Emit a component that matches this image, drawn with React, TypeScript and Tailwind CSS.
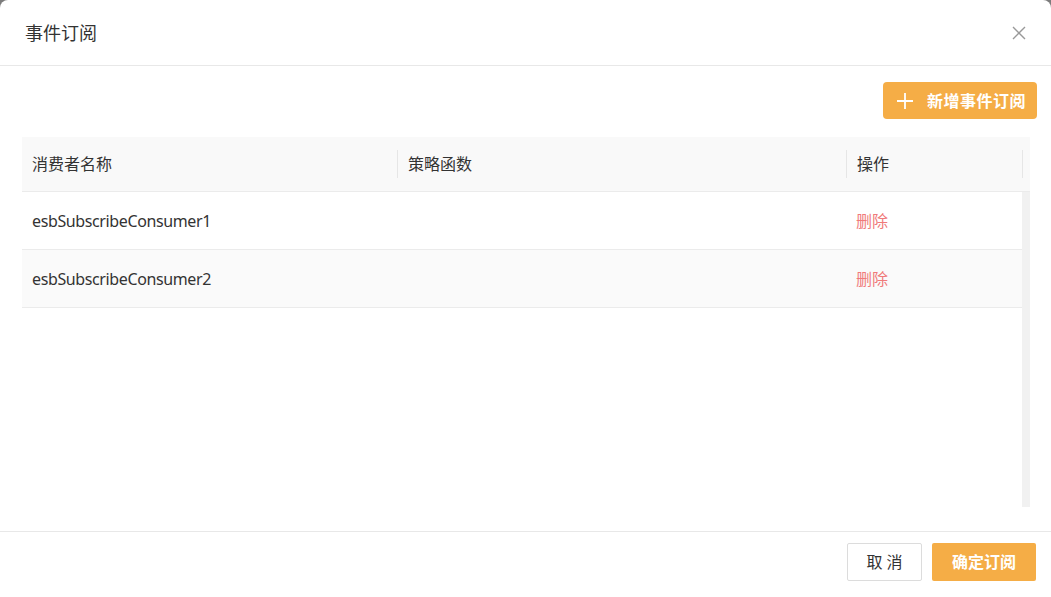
import React from "react";

const rows = [
  { name: "esbSubscribeConsumer1", fn: "" },
  { name: "esbSubscribeConsumer2", fn: "" },
];

export default function App() {
  return (
    <div
      className="w-[1051px] h-[597px] bg-[#7c7c7c] overflow-hidden"
      style={{ fontFamily: '"Noto Sans", "Noto Sans CJK SC", sans-serif' }}
    >
      <div className="w-full h-full bg-white rounded-t-[8px] flex flex-col">
        {/* header */}
        <div className="h-[66px] flex items-center justify-between pl-[25px] pr-[24px] border-b border-[#e8e8e8] shrink-0">
          <div className="text-[18px] text-[#333] pt-[1px]">事件订阅</div>
          <svg width="16" height="16" viewBox="0 0 16 16" className="text-[#999]">
            <path d="M2 2 L14 14 M14 2 L2 14" stroke="currentColor" strokeWidth="1.4" fill="none" />
          </svg>
        </div>
        {/* body */}
        <div className="flex-1 px-[22px] pt-[16px] flex flex-col">
          <div className="flex justify-end mr-[-8px]">
            <button className="h-[37px] w-[154px] rounded-[4px] bg-[#f5ad46] text-white font-semibold text-[16px] flex items-center pl-[13px] gap-[13px]">
              <svg width="18" height="18" viewBox="0 0 18 18">
                <path d="M9 1 V17 M1 9 H17" stroke="white" strokeWidth="1.8" fill="none" />
              </svg>
              <span className="tracking-[0.5px]">新增事件订阅</span>
            </button>
          </div>
          <div className="mt-[18px] w-[1008px] flex flex-col">
            {/* table header */}
            <div className="h-[55px] bg-[#f9f9f9] border-b border-[#ebebeb] flex items-center text-[16px] text-[#333]">
              <div className="w-[375px] pl-[10px] flex items-center h-full">消费者名称</div>
              <div className="w-[1px] h-[28px] bg-[#e6e6e6]"></div>
              <div className="w-[448px] pl-[10px] flex items-center h-full">策略函数</div>
              <div className="w-[1px] h-[28px] bg-[#e6e6e6]"></div>
              <div className="w-[175px] pl-[10px] flex items-center h-full">操作</div>
              <div className="w-[1px] h-[28px] bg-[#e6e6e6]"></div>
            </div>
            <div className="flex h-[315px]">
              <div className="w-[1000px] flex flex-col">
                {rows.map((r, i) => (
                  <div
                    key={r.name}
                    className={`h-[58px] flex items-center border-b border-[#ebebeb] text-[16px] text-[#333] ${i % 2 === 1 ? "bg-[#fafafa]" : "bg-white"}`}
                  >
                    <div className="w-[376px] pl-[10px] tracking-[-0.38px]">{r.name}</div>
                    <div className="w-[449px] pl-[10px]">{r.fn}</div>
                    <div className="w-[175px] pl-[9px] text-[#f07a7a]">删除</div>
                  </div>
                ))}
              </div>
              <div className="w-[8px] h-full bg-[#f1f1f1]"></div>
            </div>
          </div>
        </div>
        {/* footer */}
        <div className="h-[66px] border-t border-[#e8e8e8] flex items-start pt-[11px] justify-end gap-[10px] pr-[15px] shrink-0">
          <button className="h-[38px] w-[75px] border border-[#dcdcdc] rounded-[2px] bg-white text-[16px] text-[#333] tracking-[4px] pl-[4px]">
            取消
          </button>
          <button className="h-[38px] w-[104px] rounded-[2px] bg-[#f5ad46] text-white text-[16px] font-semibold">
            确定订阅
          </button>
        </div>
      </div>
    </div>
  );
}
